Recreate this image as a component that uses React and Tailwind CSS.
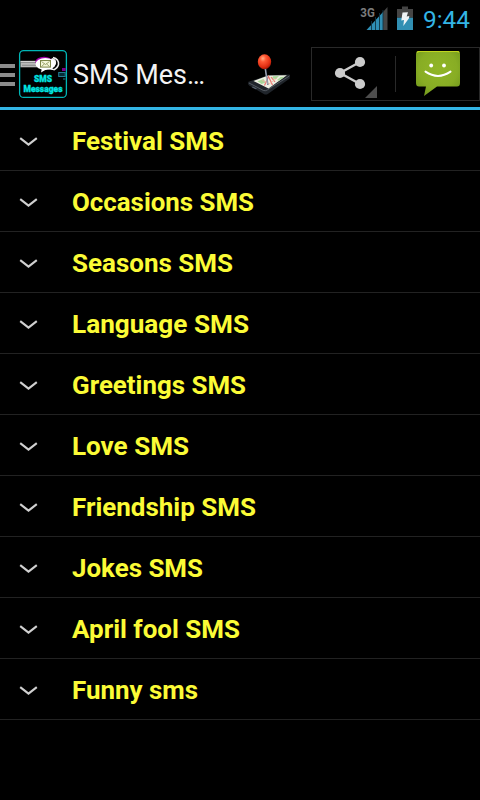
const categories = [
  { name: 'Festival SMS', width: 152 },
  { name: 'Occasions SMS', width: 182 },
  { name: 'Seasons SMS', width: 161 },
  { name: 'Language SMS', width: 177 },
  { name: 'Greetings SMS', width: 174 },
  { name: 'Love SMS', width: 117 },
  { name: 'Friendship SMS', width: 184 },
  { name: 'Jokes SMS', width: 131 },
  { name: 'April fool SMS', width: 168 },
  { name: 'Funny sms', width: 126 },
];

function Label({ children, width, className }) {
  return (
    <svg className={`block overflow-visible ${className}`} height="36" width={width}>
      <text x="0" y="27" textLength={width} lengthAdjust="spacingAndGlyphs" fill="currentColor">
        {children}
      </text>
    </svg>
  );
}

function StatusBar() {
  return (
    <div className="flex h-[38px] justify-end">
      <svg className="h-[38px] w-[60px] shrink-0" viewBox="360 0 60 38">
        <text x="360.3" y="17" fontSize="13" fontWeight="700" fill="#7c7c7c" textLength="14.5" lengthAdjust="spacingAndGlyphs">3G</text>
        <path d="M366.5 30 383 12v18z" fill="#2f8fb5" />
        <path d="M383 12 387.5 7v23H383z" fill="#454545" />
        <path d="M371.5 21v9M375.5 17v13M379.5 13v17M383 10v20" stroke="#103443" strokeWidth="0.9" />
        <path d="M402 6.5h6v2.5h5v8.7h-16V9h5z" fill="#454545" />
        <path d="M397 17.7h16V30h-16z" fill="#318fb3" />
        <path d="m402.5 12.5 5.5-.3-1.3 4.2 2.6-.4-.3 2.2-5.7 7.8.7-6-2.7.4z" fill="#eef3f5" />
      </svg>
      <Label width={47} className="ml-[3px] mr-[10px] mt-px text-[24.5px] text-[#33b5e5]">9:44</Label>
    </div>
  );
}

function AppLogo() {
  return (
    <svg className="ml-1 h-[48px] w-[48px] shrink-0 overflow-visible" viewBox="19 50 48 48">
      <rect x="19.6" y="50.6" width="46.8" height="46.8" rx="4" fill="#000" stroke="#00b6b6" strokeWidth="1.3" />
      <path d="M20.5 61h22v6.3h-22z" fill="#b9b9b9" />
      <path d="M20.5 62.4h17M22 65.3h18" stroke="#777" strokeWidth="0.7" />
      <path d="M20.5 61.3h20" stroke="#eee" strokeWidth="0.7" />
      <ellipse cx="44" cy="62" rx="8.7" ry="5.2" fill="#a000a8" />
      <path d="M52 58q5 1 4 6-1 3-4 4l3 2q-6 0-9-2z" fill="#f5f5f5" />
      <path d="M53 57.5q6 1.5 5.5 7-.8 3.5-5 5.5" fill="none" stroke="#eee" strokeWidth="1.5" />
      <ellipse cx="45.3" cy="64" rx="9.8" ry="6.1" fill="#fff" />
      <path d="m42 68-1 4.5 6-3.5z" fill="#fff" />
      <rect x="40.5" y="60.5" width="10" height="6.6" fill="#f4f6d8" stroke="#7d8548" />
      <path d="m41.5 61.5 4 3 4-3M41.5 66.5l3-2.7M49.5 66.5l-3-2.7" fill="none" stroke="#7d8548" strokeWidth="0.7" />
      <path d="M62 68h3.7v3H62z" fill="#79008a" />
      <rect x="58.7" y="72.5" width="6.5" height="4" fill="#062c36" stroke="#247d93" />
      <path d="M63 79h2.5" stroke="#247d93" />
      <g className="font-[Roboto,sans-serif] font-black" fill="#00e5e0" stroke="#00e5e0" strokeWidth="0.35">
        <text x="34" y="82" fontSize="9.8" textLength="18" lengthAdjust="spacingAndGlyphs">SMS</text>
        <text x="23.5" y="91.8" fontSize="9.8" textLength="39" lengthAdjust="spacingAndGlyphs">Messages</text>
      </g>
    </svg>
  );
}

function MapPhone() {
  return (
    <svg className="h-[46px] w-[46px] shrink-0" viewBox="246 50 46 46">
      <defs>
        <radialGradient id="pin" cx="0.38" cy="0.28" r="0.75">
          <stop offset="0" stopColor="#ffad86" />
          <stop offset="0.3" stopColor="#ff5934" />
          <stop offset="0.75" stopColor="#e12e12" />
          <stop offset="1" stopColor="#9d1706" />
        </radialGradient>
      </defs>
      <path d="m248.5 80.8 19.5-6.6 21-.6q1.5.2.8 1.8v2l-22 15.5q-2 1.3-4 0l-14.7-8.5q-1.8-1.5-.6-3.6z" fill="#20252b" />
      <path d="m249 82 14.5 7.5q2 .7 4-.7L289.4 75" fill="none" stroke="#687079" strokeWidth="0.7" />
      <path d="m253.5 80 14.7-5.4 18.7-.4-18.4 13.3z" fill="#edf0e2" />
      <path d="m257.5 80.3 6-2.2 2.3 3.3-4.2 1.6zM273 75.3l6-.3-3 3-4-.4zM277 79l3.5-3 4-.3-5.5 4z" fill="#a9d79a" />
      <path d="m264.5 84.5 4-9 4 8.5M271 76l4 5" fill="none" stroke="#e97774" strokeWidth="1.2" />
      <path d="m262 79 7 4 8-6" fill="none" stroke="#f2b5a0" strokeWidth="0.8" />
      <path d="m253 85.4 4 2-1.4.8-4-2z" fill="#56616d" />
      <path d="m265.2 66 2.7 18" stroke="#7a8398" strokeWidth="1.5" />
      <path d="m264.9 67 2.5 16" stroke="#c4cad5" strokeWidth="0.6" />
      <ellipse cx="264.5" cy="60.8" rx="6.7" ry="7.5" fill="url(#pin)" />
    </svg>
  );
}

function ShareIcon() {
  return (
    <svg className="h-[52px] w-[83px] shrink-0" viewBox="312 48 83 52">
      <path d="m360 62-20 11 20 11" fill="none" stroke="#cbcbcb" strokeWidth="2.4" />
      <circle cx="360" cy="62" r="5.1" fill="#cbcbcb" />
      <circle cx="340" cy="73" r="5.1" fill="#cbcbcb" />
      <circle cx="360" cy="84" r="5.1" fill="#cbcbcb" />
      <path d="M377 86v12h-12z" fill="#4d4d4d" />
    </svg>
  );
}

function MessageIcon() {
  return (
    <svg className="ml-[20px] h-[46px] w-[44px] shrink-0" viewBox="416 51 44 46">
      <defs>
        <radialGradient id="bubble" cx="0.5" cy="0.4" r="0.72">
          <stop offset="0" stopColor="#91b627" />
          <stop offset="0.6" stopColor="#88ad24" />
          <stop offset="1" stopColor="#6d941b" />
        </radialGradient>
      </defs>
      <path d="M419 51h38q3 0 3 3v29q0 3.5-3 3.5h-20L424 96l2-9.5h-7q-3 0-3-3.5V54q0-3 3-3z" fill="url(#bubble)" />
      <path d="M417 52.5q1-1.2 2.5-1.2h37q2 0 2.8 1.2" fill="none" stroke="#c0d51f" strokeWidth="1.2" />
      <circle cx="431.2" cy="65.5" r="1.9" fill="#fff" />
      <circle cx="444" cy="65.5" r="1.9" fill="#fff" />
      <path d="M425.5 71.6q12.5 8.6 25 0" fill="none" stroke="#fff" strokeWidth="2" strokeLinecap="round" />
    </svg>
  );
}

function ActionBar() {
  return (
    <header className="flex h-[72px] items-center border-b-[3px] border-[#33b5e5] pt-[3px]">
      <div className="mt-[2px] flex h-[22px] w-[15px] shrink-0 flex-col justify-between">
        <span className="h-1 bg-[#8c8c8c]" />
        <span className="h-1 bg-[#8c8c8c]" />
        <span className="h-1 bg-[#8c8c8c]" />
      </div>
      <AppLogo />
      <Label width={132} className="ml-[6px] mt-[2px] shrink-0 text-[27px] text-[#f3f3f3]">SMS Mes…</Label>
      <div className="ml-[41px] flex shrink-0"><MapPhone /></div>
      <div className="ml-[19px] flex h-[54px] w-[169px] shrink-0 items-center border border-[#292929]">
        <ShareIcon />
        <span className="h-9 w-px shrink-0 bg-[#292929]" />
        <MessageIcon />
      </div>
    </header>
  );
}

export default function App() {
  return (
    <div className="h-[800px] w-[480px] overflow-hidden bg-black font-[Roboto,sans-serif]">
      <StatusBar />
      <ActionBar />
      <main>
        {categories.map(({ name, width }) => (
          <div key={name} className="flex h-[61px] items-center border-b border-[#222]">
            <svg className="ml-[19px] mt-[3px] h-[12px] w-[19px] shrink-0" viewBox="0 0 19 12" fill="none" stroke="#d0d0d0" strokeWidth="2.1">
              <path d="m1.2 2.2 8.3 6.5 8.3-6.5" />
            </svg>
            <Label width={width} className="ml-[34px] mt-[2px] text-[26.5px] font-bold text-[#fbfb36]">{name}</Label>
          </div>
        ))}
      </main>
    </div>
  );
}
